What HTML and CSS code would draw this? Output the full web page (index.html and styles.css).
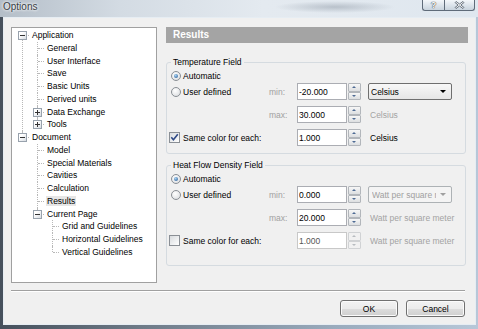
FILE: index.html
```html
<!DOCTYPE html>
<html lang="en">
<head>
    <meta charset="UTF-8">
    <title>Options</title>
    <link rel="stylesheet" href="styles.css">
</head>
<body>
<div class="window">
    <div class="titlebar">
        <span class="title">Options</span>
        <div class="caption">
            <span class="cbtn help">?</span>
            <span class="cbtn close">
                <svg width="11" height="8" viewBox="0 0 11 8"><path d="M2 0.5 L5.5 3 L9 0.5 L10 1.5 L6.8 4 L10 6.5 L9 7.5 L5.5 5 L2 7.5 L1 6.5 L4.2 4 L1 1.5 Z" fill="#fff" stroke="#4a5563" stroke-width="0.8"/></svg>
            </span>
        </div>
    </div>

    <div class="client">
        <div class="main">
            <div class="tree-box">
                <ul class="tree">
                    <li>
                        <span class="node"><span class="exp"></span>Application</span>
                        <ul>
                            <li><span class="node">General</span></li>
                            <li><span class="node">User Interface</span></li>
                            <li><span class="node">Save</span></li>
                            <li><span class="node">Basic Units</span></li>
                            <li><span class="node">Derived units</span></li>
                            <li><span class="node"><span class="exp plus"></span>Data Exchange</span></li>
                            <li><span class="node"><span class="exp plus"></span>Tools</span></li>
                        </ul>
                    </li>
                    <li>
                        <span class="node"><span class="exp"></span>Document</span>
                        <ul>
                            <li><span class="node">Model</span></li>
                            <li><span class="node">Special Materials</span></li>
                            <li><span class="node">Cavities</span></li>
                            <li><span class="node">Calculation</span></li>
                            <li><span class="node sel"><span class="txt">Results</span></span></li>
                            <li>
                                <span class="node"><span class="exp"></span>Current Page</span>
                                <ul>
                                    <li><span class="node">Grid and Guidelines</span></li>
                                    <li><span class="node">Horizontal Guidelines</span></li>
                                    <li><span class="node">Vertical Guidelines</span></li>
                                </ul>
                            </li>
                        </ul>
                    </li>
                </ul>
            </div>

            <div class="pane">
                <div class="pane-head">Results</div>

                <fieldset class="group">
                    <legend>Temperature Field</legend>
                    <div class="row first">
                        <label class="opt"><span class="radio on"></span>Automatic</label>
                    </div>
                    <div class="row">
                        <label class="opt"><span class="radio"></span>User defined</label>
                        <span class="lim">min:</span>
                        <input class="num" value="-20.000">
                        <span class="spin"><i></i><i></i></span>
                        <span class="combo"><span class="combo-text">Celsius</span><span class="arrow"></span></span>
                    </div>
                    <div class="row">
                        <span></span>
                        <span class="lim">max:</span>
                        <input class="num" value="30.000">
                        <span class="spin"><i></i><i></i></span>
                        <span class="unit off">Celsius</span>
                    </div>
                    <div class="row">
                        <label class="opt"><span class="check"><svg width="9" height="9" viewBox="0 0 9 9"><path d="M1.3 4.3 L3.4 6.8 L7.8 1.2" stroke="#2f4a86" stroke-width="1.6" fill="none"/></svg></span>Same color for each:</label>
                        <span></span>
                        <input class="num" value="1.000">
                        <span class="spin"><i></i><i></i></span>
                        <span class="unit">Celsius</span>
                    </div>
                </fieldset>

                <fieldset class="group second">
                    <legend>Heat Flow Density Field</legend>
                    <div class="row first">
                        <label class="opt"><span class="radio on"></span>Automatic</label>
                    </div>
                    <div class="row">
                        <label class="opt"><span class="radio"></span>User defined</label>
                        <span class="lim">min:</span>
                        <input class="num" value="0.000">
                        <span class="spin"><i></i><i></i></span>
                        <span class="combo off"><span class="combo-text">Watt per square meter</span><span class="arrow"></span></span>
                    </div>
                    <div class="row">
                        <span></span>
                        <span class="lim">max:</span>
                        <input class="num" value="20.000">
                        <span class="spin"><i></i><i></i></span>
                        <span class="unit off">Watt per square meter</span>
                    </div>
                    <div class="row">
                        <label class="opt"><span class="check"></span>Same color for each:</label>
                        <span></span>
                        <input class="num off" value="1.000">
                        <span class="spin off"><i></i><i></i></span>
                        <span class="unit off">Watt per square meter</span>
                    </div>
                </fieldset>
            </div>
        </div>

        <div class="sep"></div>

        <div class="buttons">
            <button class="btn">OK</button>
            <button class="btn">Cancel</button>
        </div>
    </div>
</div>
</body>
</html>
```

FILE: styles.css
```css
body {
    margin: 0;
    width: 478px;
    height: 329px;
    overflow: hidden;
    font-family: "Liberation Sans", Arial, sans-serif;
    font-size: 8.5px;
    color: #000;
}
.window {
    height: 329px;
    display: flex;
    flex-direction: column;
    background: linear-gradient(90deg, #46505c 0%, #6f7b88 30%, #9aabbd 70%, #b7c7d8 100%);
}

/* title bar */
.titlebar {
    height: 17px;
    display: flex;
    justify-content: space-between;
    align-items: flex-start;
    background:
        radial-gradient(ellipse 60px 6px at 335px 7px, rgba(150,160,172,0.55), rgba(150,160,172,0) 100%),
        linear-gradient(90deg, #b4bec8 0%, #d3dbe3 25%, #e4eaf0 55%, #dfe7ef 100%);
}
.title {
    padding: 1px 0 0 3px;
    font-size: 10px;
    line-height: 12px;
    color: #3a3f45;
    text-shadow: 0 0 3px #fff, 0 0 3px #fff;
}
.caption {
    display: flex;
    margin-right: 3px;
}
.cbtn {
    height: 11px;
    box-sizing: border-box;
    border: 1px solid #5f6b79;
    border-top: none;
    background: linear-gradient(#f4f7fa, #d9e1e9 60%, #c9d3dd);
    display: flex;
    align-items: center;
    justify-content: center;
}
.help {
    width: 22px;
    border-right: none;
    border-radius: 0 0 0 3px;
    font-size: 9px;
    font-weight: bold;
    color: #fff;
    text-shadow: 0 0 1px #333, 0 0 1px #333;
    line-height: 9px;
}
.close {
    width: 31px;
    border-radius: 0 0 3px 0;
}

/* client area */
.client {
    flex: 1;
    margin: 0 2px 4px 3px;
    border: 1px solid #e6edf3;
    background: #f0f0f0;
    padding: 9px 7px 0 7px;
    display: flex;
    flex-direction: column;
}
.main {
    display: flex;
    height: 256px;
}

/* tree */
.tree-box {
    width: 146px;
    box-sizing: border-box;
    border: 1px solid #a0a0a0;
    background: #fff;
    padding-top: 1px;
}
.tree, .tree ul {
    list-style: none;
    margin: 0;
    padding: 0;
}
.tree ul {
    margin-left: 15px;
}
.tree li {
    position: relative;
}
.tree li::before {
    content: "";
    position: absolute;
    left: 10px;
    top: 0;
    bottom: 0;
    border-left: 1px dotted #b8b8b8;
}
.tree > li:first-child::before {
    top: 6px;
}
.tree li:last-child::before {
    bottom: auto;
    height: 6px;
}
.node {
    display: block;
    position: relative;
    height: 12.75px;
    line-height: 12.75px;
    padding-left: 20px;
    white-space: nowrap;
}
.node::before {
    content: "";
    position: absolute;
    left: 11px;
    top: 6px;
    width: 6px;
    border-top: 1px dotted #b8b8b8;
}
.exp {
    position: absolute;
    left: 6px;
    top: 2px;
    width: 9px;
    height: 9px;
    box-sizing: border-box;
    border: 1px solid #98a2ad;
    background: linear-gradient(135deg, #fff 30%, #d7dce2);
    z-index: 1;
}
.exp::after {
    content: "";
    position: absolute;
    left: 1px;
    top: 3px;
    width: 5px;
    height: 1px;
    background: #333;
}
.exp.plus::before {
    content: "";
    position: absolute;
    left: 3px;
    top: 1px;
    width: 1px;
    height: 5px;
    background: #333;
}
.sel .txt {
    background: #e6e6e6;
    margin-left: -1px;
    padding: 0 1px;
}

/* right pane */
.pane {
    width: 302px;
    margin-left: 9px;
}
.pane-head {
    height: 16px;
    line-height: 16px;
    background: #a4a4a4;
    color: #fff;
    font-weight: bold;
    font-size: 10px;
    padding-left: 7px;
}
.group {
    margin: 14px 2px 0 0;
    padding: 3px 4px 7px 4px;
    border: 1px solid #d5dbe0;
    border-radius: 3px;
    min-inline-size: 0;
}
.group.second {
    margin-top: 6px;
    padding-bottom: 16px;
}
.group legend {
    padding: 0 2px;
    line-height: 10px;
    font-size: 8.5px;
}
.row {
    display: grid;
    grid-template-columns: 98px 28px 50px 21px 84px;
    align-items: center;
    height: 17px;
    margin-top: 6px;
}
.row.first {
    height: 12px;
    margin-top: 0;
}
.row.first + .row {
    margin-top: 1px;
}
.opt {
    display: flex;
    align-items: center;
    white-space: nowrap;
}
.radio {
    width: 10px;
    height: 10px;
    box-sizing: border-box;
    border: 1px solid #8a8f95;
    border-radius: 50%;
    background: radial-gradient(circle at 40% 35%, #fff, #d6d9dc);
    margin-right: 2px;
    position: relative;
}
.radio.on::after {
    content: "";
    position: absolute;
    left: 2px;
    top: 2px;
    width: 4px;
    height: 4px;
    border-radius: 50%;
    background: radial-gradient(circle at 40% 35%, #a8d4f4, #1c4f8c);
}
.check {
    width: 11px;
    height: 11px;
    box-sizing: border-box;
    border: 1px solid #8a8f95;
    background: linear-gradient(135deg, #d8dbde, #fff);
    margin: 0 3px 0 -2px;
    display: flex;
    align-items: center;
    justify-content: center;
}
.lim {
    color: #a0a0a0;
}
.num {
    width: 50px;
    height: 17px;
    box-sizing: border-box;
    border: 1px solid #abadb3;
    background: #fff;
    padding: 0 1px;
    margin: 0;
    font-family: "Liberation Sans", Arial, sans-serif;
    font-size: 8.5px;
    color: #000;
    outline: none;
}
.num.off {
    border-color: #c8c8c8;
    color: #555;
}
.spin {
    width: 13px;
    height: 17px;
    margin-left: 1px;
    display: flex;
    flex-direction: column;
}
.spin i {
    flex: 1;
    position: relative;
    border: 1px solid #b2b6bb;
    border-radius: 1px;
    background: linear-gradient(#f7f7f7, #dcdee0);
}
.spin i::after {
    content: "";
    position: absolute;
    left: 3px;
    top: 2px;
    border-left: 2.5px solid transparent;
    border-right: 2.5px solid transparent;
    border-bottom: 2px solid #4e6b94;
}
.spin i + i::after {
    border-bottom: none;
    border-top: 2px solid #4e6b94;
}
.spin.off i {
    border-color: #d0d2d4;
    background: #f1f1f1;
}
.spin.off i::after {
    border-bottom-color: #b8bcc0;
}
.spin.off i + i::after {
    border-top-color: #b8bcc0;
}
.combo {
    grid-column: 5;
    height: 17px;
    box-sizing: border-box;
    border: 1px solid #6f6f6f;
    border-radius: 2px;
    background: linear-gradient(#f8f8f8, #e6e6e6);
    display: flex;
    align-items: center;
    justify-content: space-between;
    padding: 0 5px 0 2px;
}
.combo-text {
    width: 64px;
    overflow: hidden;
    white-space: nowrap;
}
.arrow {
    border-left: 3px solid transparent;
    border-right: 3px solid transparent;
    border-top: 3px solid #000;
}
.combo.off {
    border-color: #adb2b5;
    background: #f4f4f4;
    color: #a0a0a0;
    padding-left: 3px;
}
.combo.off .arrow {
    border-top-color: #a0a0a0;
}
.unit {
    grid-column: 5;
    padding-left: 2px;
    white-space: nowrap;
}
.unit.off {
    color: #a3a3a3;
}

/* bottom */
.sep {
    margin: 7px 3px 0 0;
    height: 1px;
    background: #a0a0a0;
    border-bottom: 1px solid #fff;
}
.buttons {
    display: flex;
    justify-content: flex-end;
    gap: 8px;
    margin: 8px 3px 0 0;
}
.btn {
    width: 58px;
    height: 17px;
    padding: 0;
    border: 1px solid #707070;
    border-radius: 3px;
    background: linear-gradient(#f2f2f2 0%, #ebebeb 50%, #dddddd 51%, #cfcfcf 100%);
    box-shadow: inset 0 0 0 1px #fbfbfb;
    font-family: "Liberation Sans", Arial, sans-serif;
    font-size: 8.5px;
    color: #000;
}
.btn + .btn {
    width: 59px;
}
```
